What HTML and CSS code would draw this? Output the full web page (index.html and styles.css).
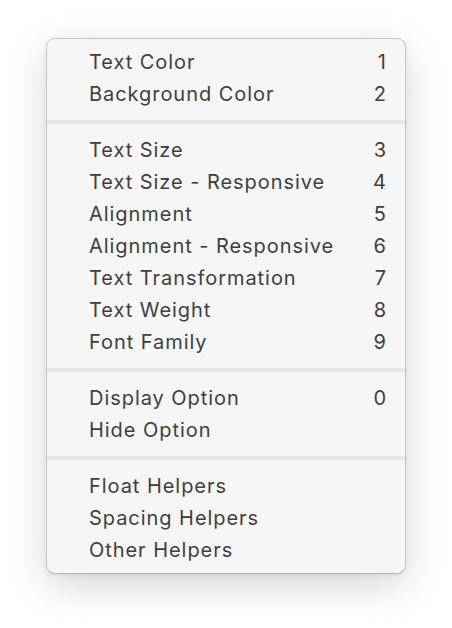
FILE: index.html
```html
<!DOCTYPE html>
<html>
<head>
<meta charset="utf-8">
<link rel="stylesheet" href="styles.css">
</head>
<body>
<div class="menu">
  <div class="section">
    <div class="item"><span>Text Color</span><span class="key">1</span></div>
    <div class="item"><span>Background Color</span><span class="key">2</span></div>
  </div>
  <div class="sep"></div>
  <div class="section">
    <div class="item"><span>Text Size</span><span class="key">3</span></div>
    <div class="item"><span>Text Size - Responsive</span><span class="key">4</span></div>
    <div class="item"><span>Alignment</span><span class="key">5</span></div>
    <div class="item"><span>Alignment - Responsive</span><span class="key">6</span></div>
    <div class="item"><span>Text Transformation</span><span class="key">7</span></div>
    <div class="item"><span>Text Weight</span><span class="key">8</span></div>
    <div class="item"><span>Font Family</span><span class="key">9</span></div>
  </div>
  <div class="sep"></div>
  <div class="section">
    <div class="item"><span>Display Option</span><span class="key">0</span></div>
    <div class="item"><span>Hide Option</span></div>
  </div>
  <div class="sep"></div>
  <div class="section">
    <div class="item"><span>Float Helpers</span></div>
    <div class="item"><span>Spacing Helpers</span></div>
    <div class="item"><span>Other Helpers</span></div>
  </div>
</div>
</body>
</html>
```
FILE: styles.css
```css
html, body {
  margin: 0;
  padding: 0;
  background: #ffffff;
}
body {
  box-sizing: border-box;
  min-height: 100vh;
  padding: 38px 0 0 46px;
  font-family: "Inter", "Liberation Sans", sans-serif;
}
.menu {
  box-sizing: border-box;
  width: 360px;
  height: 536px;
  background: #f6f6f6;
  border: 1px solid #c6c6c6;
  border-bottom-color: #b4b4b4;
  border-radius: 9px;
  padding: 7px 0;
  box-shadow: 0 12px 40px rgba(0, 0, 0, 0.16), 0 2px 6px rgba(0, 0, 0, 0.06);
}
.item {
  height: 32px;
  display: flex;
  align-items: center;
  justify-content: space-between;
  padding: 0 19px 0 42px;
  font-size: 20px;
  color: #3f3f3f;
  letter-spacing: 0.95px;
}
.key {
  letter-spacing: 0;
}
.sep {
  height: 4px;
  margin: 10px 0;
  background: #e5e5e5;
}
```
